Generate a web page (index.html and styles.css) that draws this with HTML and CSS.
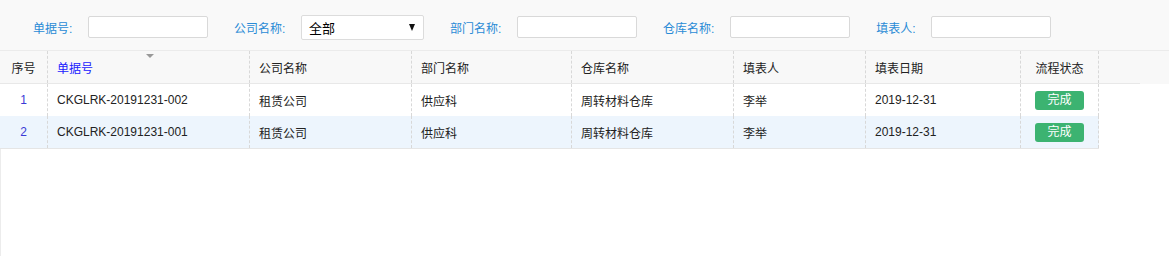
FILE: index.html
```html
<!DOCTYPE html>
<html lang="zh-CN">
<head>
  <meta charset="UTF-8">
  <title>出库管理</title>
  <link rel="stylesheet" href="styles.css">
</head>
<body>
  <div class="toolbar">
    <label class="field-label">单据号:</label>
    <input class="field-input" type="text">
    <label class="field-label">公司名称:</label>
    <div class="field-select"><span>全部</span><i class="caret"></i></div>
    <label class="field-label">部门名称:</label>
    <input class="field-input" type="text">
    <label class="field-label">仓库名称:</label>
    <input class="field-input" type="text">
    <label class="field-label">填表人:</label>
    <input class="field-input" type="text">
  </div>

  <div class="grid-head">
    <div class="head-inner">
      <div class="grid-row">
        <div class="cell center">序号</div>
        <div class="cell sortable"><a class="sort-link">单据号</a><i class="sort-arrow"></i></div>
        <div class="cell">公司名称</div>
        <div class="cell">部门名称</div>
        <div class="cell">仓库名称</div>
        <div class="cell">填表人</div>
        <div class="cell">填表日期</div>
        <div class="cell center">流程状态</div>
      </div>
    </div>
  </div>

  <div class="grid-body">
    <div class="grid-row">
      <div class="cell center num">1</div>
      <div class="cell">CKGLRK-20191231-002</div>
      <div class="cell">租赁公司</div>
      <div class="cell">供应科</div>
      <div class="cell">周转材料仓库</div>
      <div class="cell">李举</div>
      <div class="cell">2019-12-31</div>
      <div class="cell center"><span class="badge">完成</span></div>
    </div>
    <div class="grid-row alt">
      <div class="cell center num">2</div>
      <div class="cell">CKGLRK-20191231-001</div>
      <div class="cell">租赁公司</div>
      <div class="cell">供应科</div>
      <div class="cell">周转材料仓库</div>
      <div class="cell">李举</div>
      <div class="cell">2019-12-31</div>
      <div class="cell center"><span class="badge">完成</span></div>
    </div>
  </div>

  <div class="grid-empty"></div>
</body>
</html>
```

FILE: styles.css
```css
html, body {
  height: 100%;
}

body {
  margin: 0;
  display: flex;
  flex-direction: column;
  background-color: #fff;
  font-family: 'Liberation Sans', 'Noto Sans CJK SC', sans-serif;
  font-size: 12px;
  color: #222;
}

.toolbar {
  display: flex;
  align-items: center;
  height: 51px;
  padding-left: 33px;
  box-sizing: border-box;
  padding-top: 4px;
  background-color: #f9f9f9;
  border-bottom: 1px solid #ebebeb;
}

.field-label {
  color: #2a8bd6;
  margin-right: 15.7px;
}

.field-input {
  width: 120px;
  height: 22px;
  box-sizing: border-box;
  margin: 0 26px 0 0;
  padding: 0 4px;
  border: 1px solid #d9d9d9;
  border-radius: 2px;
  background-color: #fff;
}

.field-select {
  display: flex;
  align-items: center;
  justify-content: space-between;
  width: 123px;
  height: 25px;
  box-sizing: border-box;
  margin-right: 26px;
  padding: 0 8px 0 7px;
  border: 1px solid #dcdcdc;
  border-radius: 2px;
  background-color: #fff;
  font-size: 13px;
  color: #000;
}

.caret {
  width: 0;
  height: 0;
  border-left: 3.5px solid transparent;
  border-right: 3.5px solid transparent;
  border-top: 7px solid #111;
}

.grid-head {
  background-color: #f8f8f8;
}

.head-inner {
  width: 1140px;
  border-bottom: 1px solid #e8e8e8;
}

.grid-row {
  display: grid;
  grid-template-columns: 48px 202px 162px 160px 162px 132px 155px 78px;
  height: 32px;
}

.cell {
  display: flex;
  align-items: center;
  padding-left: 9px;
  border-right: 1px dashed #d8d8d8;
  white-space: nowrap;
  overflow: hidden;
}

.cell.center {
  justify-content: center;
  padding-left: 0;
}

.sortable {
  position: relative;
}

.sort-link {
  color: #1a1aff;
}

.sort-arrow {
  position: absolute;
  top: 3px;
  left: 98px;
  width: 0;
  height: 0;
  border-left: 4px solid transparent;
  border-right: 4px solid transparent;
  border-top: 4px solid #999;
}

.grid-body {
  width: 1099px;
  border-bottom: 1px solid #e5e5e5;
}

.grid-row.alt {
  background-color: #edf5fd;
}

.num {
  color: #3a3ad6;
}

.badge {
  display: inline-block;
  width: 49px;
  height: 19px;
  line-height: 19px;
  text-align: center;
  border-radius: 3px;
  background-color: #3cb371;
  color: #fff;
}

.grid-empty {
  flex: 1;
  border-left: 1px solid #ececec;
}
```
